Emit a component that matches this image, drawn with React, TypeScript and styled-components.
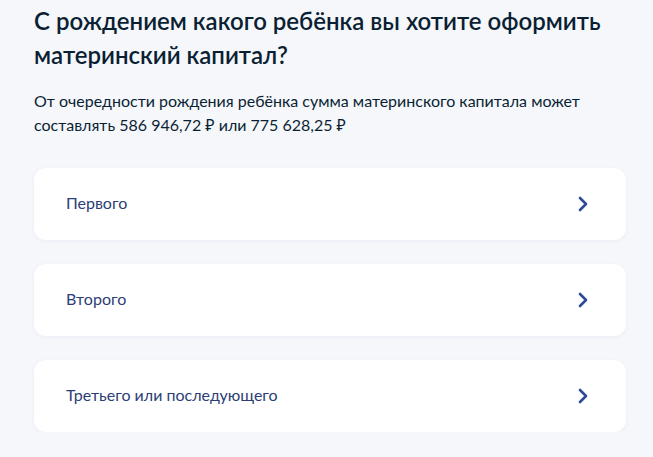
import React from 'react';
import styled, { createGlobalStyle } from 'styled-components';

const GlobalStyle = createGlobalStyle`
  html, body {
    margin: 0;
    padding: 0;
    background: #f5f7fb;
  }
  body {
    font-family: Lato, "Noto Sans", sans-serif;
    -webkit-font-smoothing: antialiased;
  }
`;

const Page = styled.div`
  padding: 4px 27px 0 34px;
  color: #0b1f33;
`;

const Title = styled.h1`
  margin: 0;
  font-size: 24px;
  line-height: 34px;
  font-weight: 600;
  color: #0b1f33;
  max-width: 580px;
`;

const Lead = styled.p`
  margin: 17px 0 0;
  font-size: 16px;
  line-height: 24px;
  color: #0b1f33;
`;

const Options = styled.div`
  display: flex;
  flex-direction: column;
  gap: 24px;
  margin-top: 31px;
`;

const Option = styled.button`
  display: flex;
  align-items: center;
  justify-content: space-between;
  height: 72px;
  width: 100%;
  padding: 0 38px 0 32px;
  box-sizing: border-box;
  border: none;
  border-radius: 12px;
  background: #ffffff;
  box-shadow: 0 1px 4px rgba(44, 62, 140, 0.06);
  font-family: inherit;
  font-size: 16px;
  color: #2c3e75;
  text-align: left;
  cursor: pointer;
`;

const Label = styled.span`
  padding-bottom: 3px;
`;

const Chevron = () => (
  <svg width="10" height="16" viewBox="0 0 10 16" fill="none">
    <path d="M2 2l6 6-6 6" stroke="#2d4a9a" strokeWidth="2.6" strokeLinecap="round" strokeLinejoin="round" />
  </svg>
);

const items = ['Первого', 'Второго', 'Третьего или последующего'];

export default function App() {
  return (
    <>
      <GlobalStyle />
      <Page>
        <Title>С рождением какого ребёнка вы хотите оформить материнский капитал?</Title>
        <Lead>
          От очередности рождения ребёнка сумма материнского капитала может составлять 586&nbsp;946,72&nbsp;₽ или
          775&nbsp;628,25&nbsp;₽
        </Lead>
        <Options>
          {items.map((label) => (
            <Option key={label}>
              <Label>{label}</Label>
              <Chevron />
            </Option>
          ))}
        </Options>
      </Page>
    </>
  );
}
